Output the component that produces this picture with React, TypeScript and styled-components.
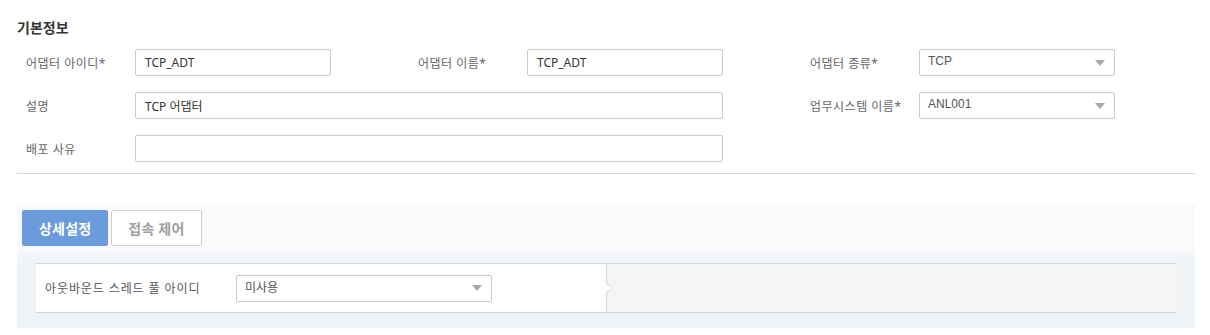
import React from "react";
import styled, { createGlobalStyle } from "styled-components";

const GlobalStyle = createGlobalStyle`
  body {
    margin: 0;
    background: #fff;
    font-family: "Noto Sans", "Noto Sans CJK KR", sans-serif;
  }
`;

// 기본정보 필드
const fields = [
  { label: "어댑터 아이디*", value: "TCP_ADT" },
  { label: "어댑터 이름*", value: "TCP_ADT" },
  { label: "어댑터 종류*", value: "TCP", select: true },
];

function App() {
  return (
    <Page>
      <GlobalStyle />
      <Title>기본정보</Title>
      <FormGrid>
        {fields.map((f) => (
          <Cell key={f.label}>
            <Label>{f.label}</Label>
            {f.select ? (
              <Select>
                <SelectText>{f.value}</SelectText>
                <Caret />
              </Select>
            ) : (
              <Input readOnly value={f.value} />
            )}
          </Cell>
        ))}
        <Cell span={2}>
          <Label>설명</Label>
          <Input readOnly value="TCP 어댑터" />
        </Cell>
        <Cell>
          <Label>업무시스템 이름*</Label>
          <Select>
            <SelectText>ANL001</SelectText>
            <Caret />
          </Select>
        </Cell>
        <Cell span={2}>
          <Label>배포 사유</Label>
          <Input readOnly value="" />
        </Cell>
      </FormGrid>
      <Divider />
      <TabSection>
        <TabBar>
          <Tab active>상세설정</Tab>
          <Tab>접속 제어</Tab>
        </TabBar>
        <Panel>
          <PanelMain>
            <PanelLabel>아웃바운드 스레드 풀 아이디</PanelLabel>
            <Select wide>
              <SelectText>미사용</SelectText>
              <Caret />
            </Select>
          </PanelMain>
          <PanelSide />
        </Panel>
      </TabSection>
    </Page>
  );
}

const Page = styled.div`
  padding: 18px 15px 0 17px;
  width: 1178px;
`;

const Title = styled.h2`
  margin: 0 0 11px;
  font-size: 14px;
  line-height: 20px;
  font-weight: 700;
  color: #333;
`;

const FormGrid = styled.div`
  display: grid;
  grid-template-columns: repeat(3, 392px);
  row-gap: 16px;
`;

const Cell = styled.div<{ span?: number }>`
  display: grid;
  grid-column: span ${(p) => p.span || 1};
  grid-template-columns: ${(p) =>
    p.span === 2 ? "118px 588px" : "118px 196px"};
  align-items: center;
  height: 27px;
`;

const Label = styled.label`
  padding-left: 9px;
  font-size: 12px;
  letter-spacing: 0.5px;
  color: #666;
  white-space: nowrap;
`;

const Input = styled.input`
  box-sizing: border-box;
  width: 100%;
  height: 27px;
  margin: 0;
  padding: 0 9px;
  border: 1px solid #c5cad3;
  border-radius: 2px;
  font-family: "Noto Sans", "Noto Sans CJK KR", sans-serif;
  font-size: 12px;
  color: #333;
  outline: none;
`;

const Select = styled.div<{ wide?: boolean }>`
  box-sizing: border-box;
  width: ${(p) => (p.wide ? "256px" : "196px")};
  height: 27px;
  display: flex;
  align-items: center;
  justify-content: space-between;
  padding: 0 9px 0 8px;
  border: 1px solid #c5cad3;
  border-radius: 2px;
  background: #fff;
`;

const SelectText = styled.span`
  font-family: "Liberation Sans", "Noto Sans CJK KR", sans-serif;
  font-size: 12px;
  color: #555;
  margin-top: -4px;
`;

const Caret = styled.span`
  width: 0;
  height: 0;
  border-left: 5px solid transparent;
  border-right: 5px solid transparent;
  border-top: 6px solid #a3a7b0;
`;

const Divider = styled.hr`
  margin: 11px 0 0;
  border: none;
  border-top: 1px solid #d9d9d9;
  width: 1178px;
`;

const TabSection = styled.div`
  margin-top: 30px;
  padding: 6px 19px 15px 5px;
  width: 1154px;
  background: linear-gradient(#f9fafc 0, #f9fafc 40px, #f0f3f6 58px, #f0f3f6 100%);
`;

const TabBar = styled.div`
  display: flex;
  gap: 3px;
  margin-bottom: 17px;
`;

const Tab = styled.div<{ active?: boolean }>`
  box-sizing: border-box;
  height: 36px;
  padding: 0 16px;
  display: flex;
  align-items: center;
  font-size: 14px;
  font-weight: 700;
  letter-spacing: 0.2px;
  border-radius: 2px;
  color: ${(p) => (p.active ? "#fff" : "#a0a0a0")};
  background: ${(p) => (p.active ? "#6a9bdb" : "#fff")};
  border: 1px solid ${(p) => (p.active ? "#6a9bdb" : "#cfcfcf")};
`;

const Panel = styled.div`
  margin-left: 14px;
  display: flex;
  height: 48px;
  border-top: 1px solid #d6d6d6;
  border-bottom: 1px solid #d6d6d6;
`;

const PanelMain = styled.div`
  position: relative;
  width: 570px;
  display: flex;
  align-items: center;
  background: #fff;
  border-right: 1px solid #d6d6d6;

  &::after {
    content: "";
    position: absolute;
    right: -7px;
    top: 19px;
    width: 8px;
    height: 10px;
    background: #fff;
    clip-path: polygon(0 0, 100% 50%, 0 100%);
  }
  &::before {
    content: "";
    position: absolute;
    right: -8px;
    top: 18px;
    width: 8px;
    height: 12px;
    background: #d6d6d6;
    clip-path: polygon(0 0, 100% 50%, 0 100%);
  }
`;

const PanelLabel = styled.span`
  width: 191px;
  padding-left: 9px;
  font-size: 12px;
  letter-spacing: 0.9px;
  color: #555;
`;

const PanelSide = styled.div`
  flex: 1;
  background: #f5f5f5;
`;

export default App;
